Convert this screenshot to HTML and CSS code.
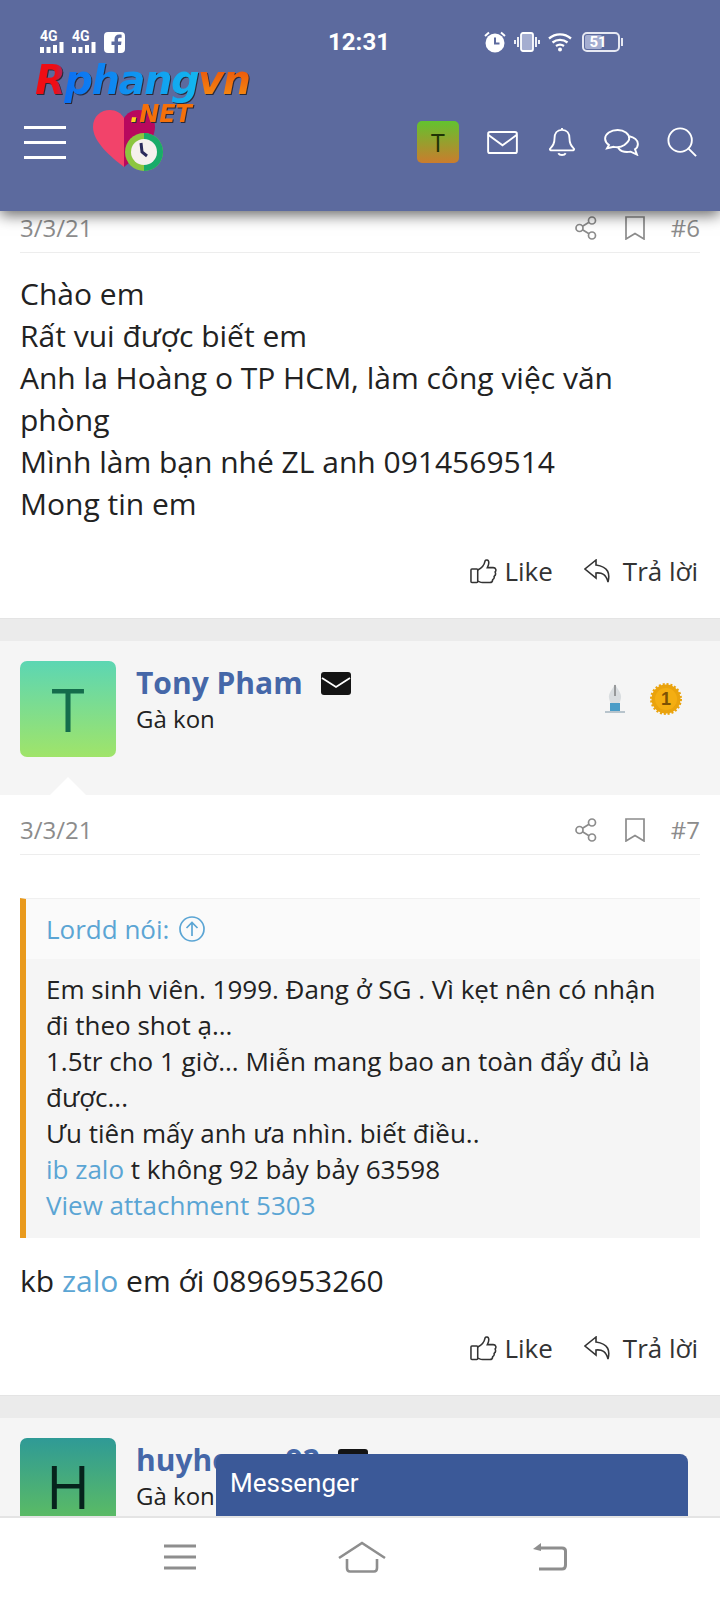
FILE: index.html
```html
<!DOCTYPE html>
<html lang="en">
<head>
    <meta charset="UTF-8">
    <meta name="viewport" content="width=device-width, initial-scale=1.0">
    <title>Rphangvn</title>
    <link rel="stylesheet" href="styles.css">
</head>
<body>
    <div id="page">
        <header id="top-bar">
            <div class="status-bar">
                <div class="status-left">
                    <div class="signal"><span>4G</span>
                        <svg width="24" height="11" viewBox="0 0 24 11"><path fill="#fff" d="M0 5h4v6H0zM6.500 5h4v6h-4zM13 3h4v8h-4zM19.500 0H23.500v11h-4z"/></svg>
                    </div>
                    <div class="signal"><span>4G</span>
                        <svg width="24" height="11" viewBox="0 0 24 11"><path fill="#fff" d="M0 5h4v6H0zM6.500 5h4v6h-4zM13 3h4v8h-4zM19.500 0H23.500v11h-4z"/></svg>
                    </div>
                    <svg width="21" height="21" viewBox="0 0 21 21"><path fill="#fff" fill-rule="evenodd" d="M4 0h13a4 4 0 0 1 4 4v13a4 4 0 0 1-4 4h-3v-8h3l.5-3.500H14V7.500c0-1 .5-1.700 1.800-1.700h1.800V2.700c-.6-.1-1.500-.2-2.400-.2-2.800 0-4.700 1.700-4.700 4.700v2.300H7.500V13h3v8H4a4 4 0 0 1-4-4V4a4 4 0 0 1 4-4z"/></svg>
                </div>
                <div class="status-time">12:31</div>
                <div class="status-right">
                    <svg width="22" height="22" viewBox="0 0 22 22"><circle cx="11" cy="12" r="9.500" fill="#fff"/><path d="M11 6.500V12.500H15.500" fill="none" stroke="#5c6a9e" stroke-width="2"/><path d="M1 5l4-3.500M21 5l-4-3.500" stroke="#fff" stroke-width="2"/></svg>
                    <svg width="26" height="20" viewBox="0 0 26 20"><rect x="7" y="1" width="12" height="18" rx="2" fill="#a4add0" stroke="#fff" stroke-width="1.800"/><path d="M4 5v10M1 8v4M22 5v10M25 8v4" stroke="#fff" stroke-width="1.800"/></svg>
                    <svg width="24" height="20" viewBox="0 0 24 20"><path d="M1 6.500C7.500 1 16.500 1 23 6.500M4.500 10.500C9 7 15 7 19.500 10.500M8 14c2.500-1.700 5.500-1.700 8 0" fill="none" stroke="#fff" stroke-width="2.300"/><circle cx="12" cy="17.500" r="2" fill="#fff"/></svg>
                    <div class="battery">
                        <div class="battery-fill"></div>
                        <span>51</span>
                    </div>
                    <div class="battery-cap"></div>
                </div>
            </div>
            <div class="nav-row">
                <div class="hamburger"><i></i><i></i><i></i></div>
                <svg class="heart" width="72" height="66" viewBox="0 0 72 66">
                    <path d="M33 60C20 50 2 35 2 20 2 9 10 3 19 3c6 0 11 3 14 8z" fill="#f2436a"/>
                    <path d="M33 60V11c3-5 8-8 14-8 9 0 17 6 17 17 0 15-18 30-31 40z" fill="#b8085e"/>
                    <circle cx="53" cy="45" r="19" fill="#8cc63f"/>
                    <path d="M53 26a19 19 0 0 1 0 38z" fill="#18ab6a"/>
                    <circle cx="53" cy="45" r="13" fill="#f5f0ee"/>
                    <path d="M50 36l1 9 5 4" fill="none" stroke="#2b2a5c" stroke-width="3"/>
                </svg>
                <div class="nav-icons">
                    <div class="nav-avatar">T</div>
                    <svg width="31" height="23" viewBox="0 0 32 24" fill="none" stroke="#fff" stroke-width="2"><rect x="1" y="1" width="30" height="22" rx="2"/><path d="M1 4l15 11L31 4"/></svg>
                    <svg class="bell-icon" width="28" height="30" viewBox="0 0 30 32" fill="none" stroke="#fff" stroke-width="2"><path d="M15 3c-5.500 0-8 4-8 9 0 6-2 8-5 11.500C2 24.500 3 25 4 25h22c1 0 2-.5 2-1.500-3-3.500-5-5.500-5-11.500 0-5-2.500-9-8-9zM15 1v2M11 28c1.500 2.500 6.500 2.500 8 0"/></svg>
                    <svg width="35" height="27" viewBox="0 0 36 28" fill="none" stroke="#fff" stroke-width="2"><path d="M14 1C7 1 1 5 1 10c0 3 2 5 4 6.500L3 20l7-1.500c5 1 9-.5 11-2C23.500 14.500 26 12.500 26 10c0-5-5-9-12-9z"/><path d="M26 7.500c5 1 9 4 9 8 0 2.500-1.500 4.500-3 5.500l2 5.500-6.500-3c-5 1-10 0-13-4"/></svg>
                    <svg width="30" height="30" viewBox="0 0 32 32" fill="none" stroke="#fff" stroke-width="2"><circle cx="14" cy="14" r="12.500"/><path d="M23 23l8 8"/></svg>
                </div>
            </div>
            <div class="logo">
                <div class="logo-name"><span class="logo-r">R</span><span class="logo-mid">phang</span><span class="logo-vn">vn</span></div>
                <div class="logo-net"><span class="logo-dot">.</span>NET</div>
            </div>
        </header>

        <main id="thread">
            <section class="post first-post">
                <div class="post-meta">
                    <span>3/3/21</span>
                    <div class="meta-right">
                        <svg class="share-icon" width="22" height="24" viewBox="0 0 22 24" fill="none" stroke="#8c8c8c" stroke-width="1.700"><circle cx="4.500" cy="12" r="3.500"/><circle cx="17" cy="4.500" r="3.500"/><circle cx="17" cy="19.500" r="3.500"/><path d="M7.500 10.200l6.500-4M7.500 13.800l6.500 4"/></svg>
                        <svg width="20" height="24" viewBox="0 0 20 24" fill="none" stroke="#8c8c8c" stroke-width="1.700"><path d="M1 1h18v22l-9-5.500L1 23z"/></svg>
                        <span class="post-no">#6</span>
                    </div>
                </div>
                <div class="post-body">
                    Chào em<br>
                    Rất vui được biết em<br>
                    Anh la Hoàng o TP HCM, làm công việc văn phòng<br>
                    Mình làm bạn nhé ZL anh 0914569514<br>
                    Mong tin em
                </div>
                <div class="post-actions">
                    <a><svg width="27" height="26" viewBox="0 0 28 26" fill="none" stroke="#333" stroke-width="1.600"><rect x="1" y="11" width="7" height="14" rx="1"/><path d="M8 12c4-2 7-6 7.500-9 .3-2 4-2.300 4 1.500 0 2-1 4-1.500 5h6c3 0 3.500 3 2 4.500 1 2 .5 3.500-1 4.500.5 2-.5 3-1.500 3.500 0 2-1.500 3-3 3H13c-2 0-3.500-1-5-1.500"/></svg>Like</a>
                    <a class="reply-link"><svg width="27" height="24" viewBox="0 0 27 24" fill="none" stroke="#333" stroke-width="1.600"><path d="M12 1L1 10l11 9v-5c6-.5 10 1 12 9 2-8 1-15-12-17z"/></svg>Trả lời</a>
                </div>
            </section>

            <div class="post-gap"></div>

            <section class="post">
                <div class="user-row">
                    <div class="avatar avatar-t">T</div>
                    <div class="user-info">
                        <div class="user-name">Tony Pham
                            <svg width="30" height="23" viewBox="0 0 30 23"><rect width="30" height="23" rx="3" fill="#141414"/><path d="M1 6l14 9L29 6" fill="none" stroke="#fff" stroke-width="1.800"/></svg>
                        </div>
                        <div class="user-title">Gà kon</div>
                    </div>
                    <div class="user-badges">
                        <svg width="22" height="30" viewBox="0 0 22 30">
                            <path d="M11 0c2 5 7 9 6 14-.3 2-1 4-2 6H7c-1-2-1.700-4-2-6C4 9 9 5 11 0z" fill="#d9dde0"/>
                            <path d="M11 1v11" stroke="#555" stroke-width="1"/>
                            <rect x="6" y="19" width="10" height="8" fill="#4a9cc7"/>
                            <rect x="1" y="27" width="20" height="2" fill="#b8c4cc"/>
                        </svg>
                        <svg width="32" height="32" viewBox="0 0 32 32">
                            <circle cx="16" cy="16" r="14.500" fill="#eaa30d" stroke="#eaa30d" stroke-width="3" stroke-dasharray="2 1.800"/>
                            <circle cx="16" cy="16" r="11" fill="#f4ae12"/>
                            <text class="medal-text" x="16" y="22" text-anchor="middle">1</text>
                        </svg>
                    </div>
                    <div class="user-arrow"></div>
                </div>
                <div class="post-meta">
                    <span>3/3/21</span>
                    <div class="meta-right">
                        <svg class="share-icon" width="22" height="24" viewBox="0 0 22 24" fill="none" stroke="#8c8c8c" stroke-width="1.700"><circle cx="4.500" cy="12" r="3.500"/><circle cx="17" cy="4.500" r="3.500"/><circle cx="17" cy="19.500" r="3.500"/><path d="M7.500 10.200l6.500-4M7.500 13.800l6.500 4"/></svg>
                        <svg width="20" height="24" viewBox="0 0 20 24" fill="none" stroke="#8c8c8c" stroke-width="1.700"><path d="M1 1h18v22l-9-5.500L1 23z"/></svg>
                        <span class="post-no">#7</span>
                    </div>
                </div>
                <blockquote class="quote">
                    <div class="quote-head">Lordd nói:
                        <svg width="26" height="26" viewBox="0 0 26 26" fill="none" stroke="#5ba5d4" stroke-width="1.700"><circle cx="13" cy="13" r="12"/><path d="M13 20V7M7.500 12L13 6.500l5.500 5.500"/></svg>
                    </div>
                    <div class="quote-body">
                        Em sinh viên. 1999. Đang ở SG . Vì kẹt nên có nhận đi theo shot ạ...<br>
                        1.5tr cho 1 giờ... Miễn mang bao an toàn đẩy đủ là được...<br>
                        Ưu tiên mấy anh ưa nhìn. biết điều..<br>
                        <a class="link">ib zalo</a> t không 92 bảy bảy 63598<br>
                        <a class="link">View attachment 5303</a>
                    </div>
                </blockquote>
                <div class="post-body reply-body">kb <a class="link">zalo</a> em ới 0896953260</div>
                <div class="post-actions">
                    <a><svg width="27" height="26" viewBox="0 0 28 26" fill="none" stroke="#333" stroke-width="1.600"><rect x="1" y="11" width="7" height="14" rx="1"/><path d="M8 12c4-2 7-6 7.500-9 .3-2 4-2.300 4 1.500 0 2-1 4-1.500 5h6c3 0 3.500 3 2 4.500 1 2 .5 3.500-1 4.500.5 2-.5 3-1.500 3.500 0 2-1.500 3-3 3H13c-2 0-3.500-1-5-1.500"/></svg>Like</a>
                    <a class="reply-link"><svg width="27" height="24" viewBox="0 0 27 24" fill="none" stroke="#333" stroke-width="1.600"><path d="M12 1L1 10l11 9v-5c6-.5 10 1 12 9 2-8 1-15-12-17z"/></svg>Trả lời</a>
                </div>
            </section>

            <div class="post-gap"></div>

            <section class="post">
                <div class="user-row">
                    <div class="avatar avatar-h">H</div>
                    <div class="user-info">
                        <div class="user-name">huyhoang92
                            <svg width="30" height="23" viewBox="0 0 30 23"><rect width="30" height="23" rx="3" fill="#141414"/><path d="M1 6l14 9L29 6" fill="none" stroke="#fff" stroke-width="1.800"/></svg>
                        </div>
                        <div class="user-title">Gà kon</div>
                    </div>
                </div>
            </section>

            <div class="messenger">Messenger</div>
        </main>

        <nav id="bottom-nav">
            <svg width="34" height="26" viewBox="0 0 34 26" fill="none" stroke="#8e8e8e" stroke-width="3"><path d="M1 2h32M1 13h32M1 24h32"/></svg>
            <svg width="48" height="32" viewBox="0 0 48 32" fill="none" stroke="#8e8e8e" stroke-width="2.600"><path d="M1 17L24 2l23 15M9 18v9c0 2.500 1 3.500 3 3.500h24c2 0 3-1 3-3.500v-9"/></svg>
            <svg class="back-icon" width="34" height="30" viewBox="0 0 34 30" fill="none" stroke="#8e8e8e" stroke-width="3"><path d="M5 6h24c2.500 0 3.500 1 3.500 3v14c0 3-1 4-3.500 4H6"/><path d="M0 7l8-6v8z" fill="#8e8e8e" stroke="none"/></svg>
        </nav>
    </div>
</body>
</html>
```
FILE: styles.css
```css
* {
    box-sizing: border-box;
}

body {
    margin: 0;
    font-family: "Open Sans", sans-serif;
    color: #222;
    background: #fff;
}

#page {
    width: 720px;
    height: 1600px;
    display: flex;
    flex-direction: column;
    overflow: hidden;
}

/* header */
#top-bar {
    position: relative;
    z-index: 2;
    flex: none;
    height: 211px;
    background: #5c6a9e;
    box-shadow: 0 4px 14px rgba(0, 0, 0, 0.6);
}

.status-bar {
    display: flex;
    justify-content: space-between;
    align-items: center;
    height: 30px;
    padding: 27px 0 0 40px;
    box-sizing: content-box;
    color: #fff;
    font-family: Roboto, sans-serif;
}

.status-left {
    display: flex;
    align-items: center;
    gap: 8px;
    width: 194px;
}

.signal {
    display: flex;
    flex-direction: column;
    width: 24px;
    font-size: 14px;
    font-weight: 700;
    line-height: 11px;
}

.status-time {
    font-size: 24px;
    font-weight: 700;
}

.status-right {
    display: flex;
    align-items: center;
    gap: 8px;
    width: 236px;
}

.battery {
    position: relative;
    width: 38px;
    height: 20px;
    margin-left: 2px;
    border: 2px solid #e6e8f2;
    border-radius: 5px;
    text-align: center;
    font-size: 15px;
    font-weight: 700;
    line-height: 17px;
}

.battery span {
    position: relative;
    margin-right: 6px;
}

.battery-fill {
    position: absolute;
    left: 1px;
    top: 1px;
    bottom: 1px;
    width: 51%;
    border-radius: 2px;
    background: #a4add0;
}

.battery-cap {
    width: 2px;
    height: 8px;
    margin-left: -7px;
    background: #e6e8f2;
}

.nav-row {
    display: flex;
    align-items: center;
    height: 70px;
    margin-top: 50px;
    padding: 0 23px 0 24px;
}

.hamburger {
    display: flex;
    flex-direction: column;
    gap: 12px;
    width: 42px;
}

.hamburger i {
    display: block;
    height: 3px;
    background: #fff;
}

.heart {
    align-self: flex-start;
    margin-left: 25px;
}

.nav-icons {
    display: flex;
    align-items: center;
    gap: 28px;
    margin-left: auto;
}

.bell-icon {
    margin-left: 2px;
}

.nav-avatar {
    width: 42px;
    height: 42px;
    border-radius: 5px;
    background: linear-gradient(#62c32f, #cb7c2d);
    color: #1f3305;
    font-size: 25px;
    line-height: 42px;
    text-align: center;
}

.logo {
    position: absolute;
    left: 35px;
    top: 56px;
    font-family: "DejaVu Sans", sans-serif;
    font-style: italic;
    font-weight: 700;
}

.logo-name {
    font-size: 40px;
    line-height: 48px;
    letter-spacing: -1.500px;
    filter: drop-shadow(1px 1px 0 #2a2a3a);
}

.logo-r,
.logo-mid,
.logo-vn {
    -webkit-background-clip: text;
    background-clip: text;
    color: transparent;
}

.logo-r {
    background-image: linear-gradient(90deg, #f00d14, #f00d14 70%, #a22a6a);
}

.logo-mid {
    background-image: linear-gradient(90deg, #0c6ff2, #13b6ef);
}

.logo-vn {
    background-image: linear-gradient(#e8420a, #f79410);
}

.logo-net {
    margin: -3px 0 0 95px;
    font-size: 24px;
    line-height: 26px;
    color: #f5700a;
    filter: drop-shadow(1px 1px 0 #2a2a3a);
}

.logo-dot {
    color: #ffd21f;
}

/* thread */
#thread {
    position: relative;
    flex: 1;
    overflow: hidden;
}

.post-meta {
    display: flex;
    justify-content: space-between;
    align-items: center;
    height: 42px;
    margin: 0 20px;
    padding-bottom: 8px;
    border-bottom: 1px solid #ededed;
    color: #8c8c8c;
    font-size: 24px;
}

.post .user-row + .post-meta {
    height: 60px;
    padding: 10px 0 0;
}

.meta-right {
    display: flex;
    align-items: center;
    gap: 28px;
}

.post-no {
    margin-left: -2px;
}

.post-body {
    padding: 20px 20px 0;
    font-size: 30px;
    line-height: 42px;
}

.reply-body {
    padding-top: 22px;
}

.link {
    color: #5ba5d4;
}

.post-actions {
    display: flex;
    justify-content: flex-end;
    align-items: center;
    gap: 31px;
    height: 46px;
    margin-top: 23px;
    padding-right: 22px;
    font-size: 26px;
    color: #333;
}

.post-actions a {
    display: flex;
    align-items: center;
    gap: 7px;
}

.post-actions .reply-link {
    gap: 12px;
}

.post-gap {
    height: 23px;
    margin-top: 24px;
    background: #ebebeb;
    border-top: 1px solid #e4e4e4;
}

.user-row {
    position: relative;
    display: flex;
    height: 154px;
    padding: 20px 20px 0;
    background: #f5f5f5;
}

.avatar {
    flex: none;
    width: 96px;
    height: 96px;
    border-radius: 7px;
    font-size: 60px;
    line-height: 96px;
    text-align: center;
}

.avatar-t {
    background: linear-gradient(#5cd6b3, #a0e469);
    color: #146c4c;
}

.avatar-h {
    background: linear-gradient(#2f9a96, #64c25a);
    color: #06231c;
}

.user-info {
    padding-left: 20px;
}

.user-name {
    display: flex;
    align-items: center;
    gap: 18px;
    color: #4567a8;
    font-size: 30px;
    font-weight: 700;
    line-height: 44px;
}

.user-title {
    margin-top: -3px;
    font-size: 24px;
    line-height: 34px;
}

.user-badges {
    display: flex;
    align-items: center;
    gap: 24px;
    height: 34px;
    margin: 21px 18px 0 auto;
}

.medal-text {
    fill: #7c5204;
    font-family: "Liberation Sans", sans-serif;
    font-size: 18px;
    font-weight: 700;
}

.user-arrow {
    position: absolute;
    left: 50px;
    bottom: 0;
    border: 18px solid transparent;
    border-top: 0;
    border-bottom-color: #fff;
}

.quote {
    margin: 43px 20px 0;
    border-left: 6px solid #e99a1d;
    border-top: 1px solid #f0f0f0;
    background: #f5f5f5;
    font-size: 26px;
}

.quote-head {
    display: flex;
    align-items: center;
    gap: 10px;
    height: 60px;
    padding-left: 20px;
    background: #fafafa;
    color: #5ba5d4;
}

.quote-body {
    padding: 12px 20px 15px;
    line-height: 36px;
}

.messenger {
    position: absolute;
    left: 216px;
    right: 32px;
    bottom: 0;
    height: 62px;
    padding: 14px 14px;
    border-radius: 8px 8px 0 0;
    background: #3b5998;
    color: #fff;
    font-family: Roboto, sans-serif;
    font-size: 26px;
}

/* phone buttons */
#bottom-nav {
    flex: none;
    display: flex;
    justify-content: center;
    align-items: center;
    gap: 141px;
    height: 84px;
    padding: 0 0 4px 9px;
    background: #fff;
    border-top: 2px solid #e4e4e4;
}

.back-icon {
    margin-left: 6px;
}
```
